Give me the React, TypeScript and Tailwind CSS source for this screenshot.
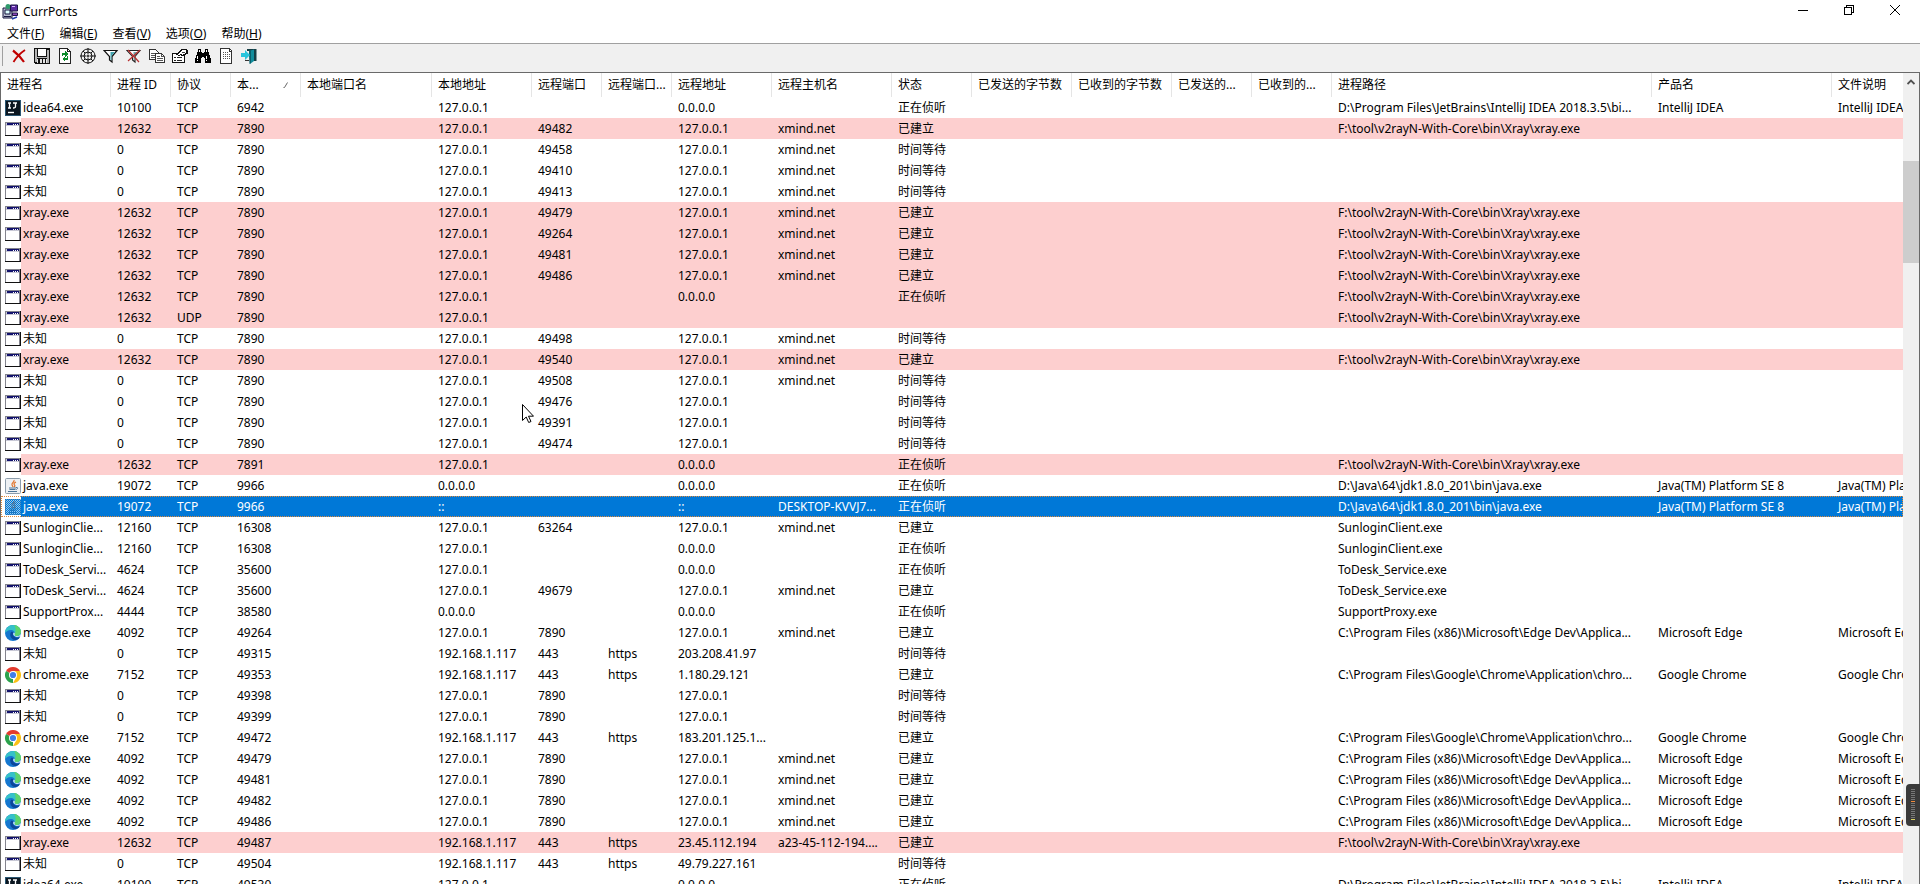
import type { ReactNode } from "react";
import clsx from "clsx";

type IconKind = "app" | "idea" | "java" | "edge" | "chrome";

type Conn = {
  icon: IconKind;
  name: string;
  pid: string;
  proto: string;
  localPort: string;
  localAddr: string;
  remotePort: string;
  remotePortName: string;
  remoteAddr: string;
  host: string;
  state: string;
  path: string;
  product: string;
  desc: string;
  selected?: boolean;
};

const LISTEN = "正在侦听";
const OPEN = "已建立";
const WAIT = "时间等待";

const XRAY_PATH = "F:\\tool\\v2rayN-With-Core\\bin\\Xray\\xray.exe";
const EDGE_PATH = "C:\\Program Files (x86)\\Microsoft\\Edge Dev\\Applica...";
const CHROME_PATH = "C:\\Program Files\\Google\\Chrome\\Application\\chro...";
const IDEA_PATH = "D:\\Program Files\\JetBrains\\IntelliJ IDEA 2018.3.5\\bi...";
const JAVA_PATH = "D:\\Java\\64\\jdk1.8.0_201\\bin\\java.exe";

const base: Conn = {
  icon: "app",
  name: "未知",
  pid: "0",
  proto: "TCP",
  localPort: "7890",
  localAddr: "127.0.0.1",
  remotePort: "",
  remotePortName: "",
  remoteAddr: "127.0.0.1",
  host: "",
  state: WAIT,
  path: "",
  product: "",
  desc: "",
};

const unknown = (over: Partial<Conn>): Conn => ({ ...base, ...over });

const xray = (over: Partial<Conn>): Conn => ({
  ...base,
  name: "xray.exe",
  pid: "12632",
  host: "xmind.net",
  state: OPEN,
  path: XRAY_PATH,
  ...over,
});

const edge = (localPort: string): Conn => ({
  ...base,
  icon: "edge",
  name: "msedge.exe",
  pid: "4092",
  localPort,
  remotePort: "7890",
  host: "xmind.net",
  state: OPEN,
  path: EDGE_PATH,
  product: "Microsoft Edge",
  desc: "Microsoft Edge",
});

const chrome = (localPort: string, remoteAddr: string): Conn => ({
  ...base,
  icon: "chrome",
  name: "chrome.exe",
  pid: "7152",
  localPort,
  localAddr: "192.168.1.117",
  remotePort: "443",
  remotePortName: "https",
  remoteAddr,
  state: OPEN,
  path: CHROME_PATH,
  product: "Google Chrome",
  desc: "Google Chrome",
});

const idea = (localPort: string): Conn => ({
  ...base,
  icon: "idea",
  name: "idea64.exe",
  pid: "10100",
  localPort,
  remoteAddr: "0.0.0.0",
  state: LISTEN,
  path: IDEA_PATH,
  product: "IntelliJ IDEA",
  desc: "IntelliJ IDEA",
});

const java = (addr: string, over: Partial<Conn> = {}): Conn => ({
  ...base,
  icon: "java",
  name: "java.exe",
  pid: "19072",
  localPort: "9966",
  localAddr: addr,
  remoteAddr: addr,
  state: LISTEN,
  path: JAVA_PATH,
  product: "Java(TM) Platform SE 8",
  desc: "Java(TM) Platform SE 8",
  ...over,
});

const service = (name: string, pid: string, localPort: string, path: string, over: Partial<Conn> = {}): Conn => ({
  ...base,
  name,
  pid,
  localPort,
  path,
  remoteAddr: "0.0.0.0",
  state: LISTEN,
  ...over,
});

const rows: Conn[] = [
  idea("6942"),
  xray({ remotePort: "49482" }),
  unknown({ remotePort: "49458", host: "xmind.net" }),
  unknown({ remotePort: "49410", host: "xmind.net" }),
  unknown({ remotePort: "49413", host: "xmind.net" }),
  xray({ remotePort: "49479" }),
  xray({ remotePort: "49264" }),
  xray({ remotePort: "49481" }),
  xray({ remotePort: "49486" }),
  xray({ remoteAddr: "0.0.0.0", host: "", state: LISTEN }),
  xray({ proto: "UDP", remoteAddr: "", host: "", state: "" }),
  unknown({ remotePort: "49498", host: "xmind.net" }),
  xray({ remotePort: "49540" }),
  unknown({ remotePort: "49508", host: "xmind.net" }),
  unknown({ remotePort: "49476" }),
  unknown({ remotePort: "49391" }),
  unknown({ remotePort: "49474" }),
  xray({ localPort: "7891", remoteAddr: "0.0.0.0", host: "", state: LISTEN }),
  java("0.0.0.0"),
  java("::", { host: "DESKTOP-KVVJ7...", selected: true }),
  service("SunloginClie...", "12160", "16308", "SunloginClient.exe", {
    remotePort: "63264",
    remoteAddr: "127.0.0.1",
    host: "xmind.net",
    state: OPEN,
  }),
  service("SunloginClie...", "12160", "16308", "SunloginClient.exe"),
  service("ToDesk_Servi...", "4624", "35600", "ToDesk_Service.exe"),
  service("ToDesk_Servi...", "4624", "35600", "ToDesk_Service.exe", {
    remotePort: "49679",
    remoteAddr: "127.0.0.1",
    host: "xmind.net",
    state: OPEN,
  }),
  service("SupportProx...", "4444", "38580", "SupportProxy.exe", { localAddr: "0.0.0.0" }),
  edge("49264"),
  unknown({ localPort: "49315", localAddr: "192.168.1.117", remotePort: "443", remotePortName: "https", remoteAddr: "203.208.41.97" }),
  chrome("49353", "1.180.29.121"),
  unknown({ localPort: "49398", remotePort: "7890" }),
  unknown({ localPort: "49399", remotePort: "7890" }),
  chrome("49472", "183.201.125.1..."),
  edge("49479"),
  edge("49481"),
  edge("49482"),
  edge("49486"),
  xray({
    localPort: "49487",
    localAddr: "192.168.1.117",
    remotePort: "443",
    remotePortName: "https",
    remoteAddr: "23.45.112.194",
    host: "a23-45-112-194....",
  }),
  unknown({ localPort: "49504", localAddr: "192.168.1.117", remotePort: "443", remotePortName: "https", remoteAddr: "49.79.227.161" }),
  idea("49530"),
];

const columns = [
  { label: "进程名", width: "w-[110px]" },
  { label: "进程 ID", width: "w-[60px]" },
  { label: "协议", width: "w-[60px]" },
  { label: "本...", width: "w-[70px]", sorted: true },
  { label: "本地端口名", width: "w-[131px]" },
  { label: "本地地址", width: "w-[100px]" },
  { label: "远程端口", width: "w-[70px]" },
  { label: "远程端口...", width: "w-[70px]" },
  { label: "远程地址", width: "w-[100px]" },
  { label: "远程主机名", width: "w-[120px]" },
  { label: "状态", width: "w-[80px]" },
  { label: "已发送的字节数", width: "w-[100px]" },
  { label: "已收到的字节数", width: "w-[100px]" },
  { label: "已发送的...", width: "w-[80px]" },
  { label: "已收到的...", width: "w-[80px]" },
  { label: "进程路径", width: "w-[320px]" },
  { label: "产品名", width: "w-[180px]" },
  { label: "文件说明", width: "" },
];

const menus = [
  { label: "文件", key: "F" },
  { label: "编辑", key: "E" },
  { label: "查看", key: "V" },
  { label: "选项", key: "O" },
  { label: "帮助", key: "H" },
];

function Svg({ children, crisp = true }: { children: ReactNode; crisp?: boolean }) {
  return (
    <svg width="16" height="16" viewBox="0 0 16 16" fill="none" shapeRendering={crisp ? "crispEdges" : "auto"} aria-hidden="true">
      {children}
    </svg>
  );
}

function ProcessIcon({ kind, selected }: { kind: IconKind; selected?: boolean }) {
  if (kind === "idea") {
    return (
      <Svg crisp={false}>
        <path d="M0 0h16v16H0z" fill="#2a5570" />
        <path d="M1 1h14v14H1z" fill="#0b1620" />
        <path d="M3 3h3M4.500 3v5M3 8h3M8 3h4M10.500 3v3.500Q10.500 8 8 8" stroke="#fff" strokeWidth="1.300" />
        <path d="M3 12.500h6" stroke="#fff" strokeWidth="1.400" />
      </Svg>
    );
  }
  if (kind === "java") {
    return (
      <Svg crisp={false}>
        <rect x="0.500" y="0.500" width="15" height="15" rx="1" fill="#eef1f4" stroke="#8c9cab" />
        <path d="M9 2c1 2-3 3-2 5 .3.700 1 1 .8 2M11 4C9 5 8.500 6 9.500 7s0 1.500-.5 2" stroke="#e0762f" strokeWidth="1.200" />
        <path d="M4 10h7M4.500 11.500h6M11 9.500c2.500-.5 2 1.500 0 2M3 13.500h9" stroke="#4c7597" />
        {selected && (
          <>
            <path d="M0 0h16v16H0z" fill="#0078d7" fillOpacity="0.350" />
            <path
              d="M0 .5h16M0 2.500h16M0 4.500h16M0 6.500h16M0 8.500h16M0 10.500h16M0 12.500h16M0 14.500h16"
              stroke="#0078d7"
              strokeDasharray="1 1"
            />
            <path
              d="M1 1.500h15M1 3.500h15M1 5.500h15M1 7.500h15M1 9.500h15M1 11.500h15M1 13.500h15M1 15.500h15"
              stroke="#0078d7"
              strokeDasharray="1 1"
            />
          </>
        )}
      </Svg>
    );
  }
  if (kind === "edge") {
    return (
      <Svg crisp={false}>
        <circle cx="8" cy="8" r="8" fill="#1577cf" />
        <path d="M0 8C0 3 4 0 8 0c5 0 8 3.500 8 6.800C16 9.500 14 11 11.500 11c-1.500 0-2.500-.6-2-1.500C10.500 7.500 9 5 6 5 3 5 1 6.500 0 8z" fill="#35c1c8" />
        <path d="M9 0c4 .3 7 3.500 7 6.800C16 9.500 14 11 11.500 11c-1.500 0-2.500-.6-2-1.500C11 7 11 2 9 0z" fill="#5fd46c" />
        <path d="M6 7c-2 3 0 7.500 4 8 2 .2 4-1 5-3-2 1-5 1-6.500-1C7.500 9.800 7.800 8.500 8.500 8 8 7 7 6.500 6 7z" fill="#0c479b" />
        <path d="M9 7.500c-.8.500-1 2 0 3 1.500 1.500 4 1.500 6.500.8l.5-2.300C14.500 11 13 11.200 11.500 11c-1.500 0-2.500-.6-2-1.500.3-.8.200-1.500-.5-2z" fill="#fff" />
      </Svg>
    );
  }
  if (kind === "chrome") {
    return (
      <Svg crisp={false}>
        <path d="M8 8 1.070 4A8 8 0 0 1 14.930 4z" fill="#e33b2e" />
        <path d="M8 8v8A8 8 0 0 1 1.070 4z" fill="#2ba24c" />
        <path d="M8 4h6.930A8 8 0 0 1 8 16l3.460-6z" fill="#fbc116" />
        <circle cx="8" cy="8" r="4" fill="#fff" />
        <circle cx="8" cy="8" r="3.100" fill="#3f7ee8" />
      </Svg>
    );
  }
  return (
    <Svg>
      <path d="M0 1h16v14H0z" fill="#111" />
      <path d="M0 1h15v13H0z" fill="#84848e" />
      <path d="M1 2h13v3H1z" fill="#c9c9d6" />
      <path d="M2 2h12v2H2z" fill="#12126c" />
      <path d="M1 5h13v9H1z" fill="#fff" />
      <path d="M8 3h1v1H8zM10 3h1v1h-1zM12 3h1v1h-1z" fill="#fff" />
    </Svg>
  );
}

const tools: { label: string; icon: ReactNode }[] = [
  {
    label: "关闭连接",
    icon: (
      <Svg crisp={false}>
        <path d="M2 2.500C6 5.500 10 9.500 13 14" stroke="#c00000" strokeWidth="2.200" />
        <path d="M14 2C9.500 5 5.500 9 2.500 14" stroke="#c00000" strokeWidth="1.800" />
      </Svg>
    ),
  },
  {
    label: "保存",
    icon: (
      <Svg>
        <path d="M0 0h16v16H1L0 15z" fill="#111" />
        <path d="M1 1h2v13H1zM13 2h2v13h-2zM2 9h12v1H2z" fill="#b4b4b4" />
        <path d="M3 0h10v8H3z" fill="#fff" />
        <path d="M3 0h1v8H3zM12 0h1v8h-1zM3 0h10v1H3zM3 8h10v1H3z" fill="#111" />
        <path d="M3 11h10v4H3z" fill="#e4e4e4" />
        <path d="M4 11h2v4H4zM8 11h1v4H8zM11 11h1v4h-1z" fill="#111" />
      </Svg>
    ),
  },
  {
    label: "刷新",
    icon: (
      <Svg>
        <path d="M2.500.5h8l3 3v12h-11z" fill="#fff" stroke="#222" />
        <path d="M10.500.5v3h3" stroke="#222" />
        <path d="M5 8V5h3V3l3 3-3 3V7H6v1zM11 8v4H8v2l-3-3 3-3v2h2V8z" fill="#0a8a2a" />
      </Svg>
    ),
  },
  {
    label: "查找窗口",
    icon: (
      <Svg crisp={false}>
        <circle cx="8" cy="8" r="7" stroke="#111" />
        <circle cx="8" cy="8" r="4" stroke="#111" />
        <path d="M8 0v6.500M8 9.500V16M0 8h6.500M9.500 8H16" stroke="#111" />
        <circle cx="8" cy="8" r="1" fill="#111" />
        <path d="m3 3 2 2M13 3l-2 2M3 13l2-2M13 13l-2-2" stroke="#111" />
      </Svg>
    ),
  },
  {
    label: "筛选",
    icon: (
      <Svg crisp={false}>
        <path d="M1 2.500h13L9 8.500V14l-2.500-2V8.500z" fill="#fff" stroke="#111" strokeWidth="1.200" />
        <path d="M7.500 4H12L8.500 8v4.500l-1-1z" fill="#3fa3ad" />
      </Svg>
    ),
  },
  {
    label: "清除筛选",
    icon: (
      <Svg crisp={false}>
        <path d="M1 2.500h13L9 8.500V14l-2.500-2V8.500z" fill="#fff" stroke="#222" strokeWidth="1.100" />
        <path d="M7.500 4H12L8.500 8v4.500l-1-1z" fill="#70a8ac" />
        <path d="m2 2 11 12M14 2 2 13" stroke="#b83030" strokeWidth="1.200" />
      </Svg>
    ),
  },
  {
    label: "复制",
    icon: (
      <Svg>
        <path d="M.5 1.500h6l3 3v7h-9z" fill="#fff" stroke="#333" />
        <path d="M2 5.500h5M2 7.500h5M2 9.500h4" stroke="#555" />
        <path d="M6.500 5.500h6l3 3v6h-9z" fill="#fff" stroke="#333" />
        <path d="M12.500 5.500v3h3M8 8.500h3M8 10.500h6M8 12.500h6" stroke="#555" />
      </Svg>
    ),
  },
  {
    label: "属性",
    icon: (
      <Svg>
        <path d="M.5 5.500h12v9H.5z" fill="#fff" stroke="#111" />
        <path d="M2 9.500h2M5 9.500h5M2 12.500h2M5 12.500h5" stroke="#222" />
        <path d="M4 6h1V5h1V4h1V3h1V2h1V1h6v1h1v4h-2v1h-2v1H9V7H8v1H6V7H4z" fill="#111" />
        <path d="M6 6h1V5h1V4h1V3h1V2h4v3h-1v1h-2v1h-1V6H8v1H6z" fill="#fff" />
        <path d="M10 4h3v1h-3z" fill="#444" />
      </Svg>
    ),
  },
  {
    label: "查找",
    icon: (
      <Svg>
        <path d="M3 1h3v3h1v1h2V4h1V1h3v3h1v3h1v3h1v5h-6v-5H9V9H7v1H6v5H0v-5h1V7h1V4h1z" fill="#000" />
        <path d="M4 2h1v2H4zM11 2h1v2h-1zM2 8h1v3H2zM11 8h1v3h-1zM2 12h1v1H2zM11 12h1v1h-1z" fill="#fff" />
      </Svg>
    ),
  },
  {
    label: "报告",
    icon: (
      <Svg>
        <path d="M2.500.5h9l2 2v13h-11z" fill="#fff" stroke="#333" />
        <path d="M11.500 1v2.500H14" stroke="#333" />
        <path d="M5 4.500h6M5 6.500h7M5 8.500h7M5 10.500h7" stroke="#555" strokeDasharray="1 1" />
      </Svg>
    ),
  },
  {
    label: "退出",
    icon: (
      <Svg crisp={false}>
        <path d="M6 1h9.500v12H12V3H6z" fill="#173f46" />
        <path d="m8 3 5-1.500V13L9 16z" fill="#128d9c" />
        <path d="m8 3 2-.6V15l-1.500 1z" fill="#0b5f6b" />
        <path d="M0 5h4V2l5 5-5 5V9H0z" fill="#27c4dc" />
        <path d="M4 12.500h4" stroke="#333" />
      </Svg>
    ),
  },
];

function TitleIcon() {
  return (
    <Svg crisp={false}>
      <path d="M1 4h9v10H1z" fill="#b9bdd0" stroke="#16163f" />
      <path d="M3 6h5v4H3z" fill="#dff" stroke="#16163f" />
      <path d="M2 12.500h7" stroke="#16163f" />
      <circle cx="6" cy="2.500" r="2.500" fill="#2f9a6b" />
      <path d="M8.500 1h7v6h-7z" fill="#5a2aa0" stroke="#1b1445" />
      <path d="M10 2.500h3" stroke="#d9b8ff" />
      <path d="M10.500 9h5v2.500h-5z" fill="#8d46b8" stroke="#1b1445" />
      <path d="M10 15l5-2" stroke="#1c3aa8" strokeWidth="1.500" />
    </Svg>
  );
}

function TitleBar() {
  return (
    <header className="flex h-6 items-start justify-between">
      <div className="flex items-center gap-[5px] pt-1 pl-0.5">
        <TitleIcon />
        <h1 className="leading-4">CurrPorts</h1>
      </div>
      <div className="flex pr-0.5">
        <button aria-label="最小化" className="flex h-5 w-[46px] items-center justify-center">
          <svg width="10" height="10" viewBox="0 0 10 10" stroke="#000" shapeRendering="crispEdges">
            <path d="M0 5.500h10" />
          </svg>
        </button>
        <button aria-label="还原" className="flex h-5 w-[46px] items-center justify-center">
          <svg width="10" height="10" viewBox="0 0 10 10" stroke="#000" fill="none" shapeRendering="crispEdges">
            <path d="M.5 2.500h7v7h-7zM2.500 2V.5h7v7H8" />
          </svg>
        </button>
        <button aria-label="关闭" className="flex h-5 w-[46px] items-center justify-center">
          <svg width="10" height="10" viewBox="0 0 10 10" stroke="#000">
            <path d="m0 0 10 10M10 0 0 10" />
          </svg>
        </button>
      </div>
    </header>
  );
}

function MenuBar() {
  return (
    <nav className="flex h-5 gap-px border-b border-[#a0a0a0]">
      {menus.map((m) => (
        <button key={m.key} className="px-[7px] leading-5">
          {m.label}(<span className="underline">{m.key}</span>)
        </button>
      ))}
    </nav>
  );
}

function Toolbar() {
  return (
    <div role="toolbar" className="flex h-[29px] items-center border-b border-[#696969] bg-[#f0f0f0] pb-1 pl-0.5">
      <div className="mr-1 h-5 w-px bg-[#a0a0a0]" />
      {tools.map((t) => (
        <button key={t.label} aria-label={t.label} className="flex size-[23px] items-center justify-center">
          {t.icon}
        </button>
      ))}
    </div>
  );
}

function Cell({ children }: { children?: ReactNode }) {
  return <td className="overflow-hidden pl-1.5 whitespace-nowrap">{children}</td>;
}

function Row({ row }: { row: Conn }) {
  return (
    <tr
      className={clsx(
        "h-[21px]",
        row.name === "xray.exe" && "bg-[#fdcfcf]",
        row.selected && "bg-[#0078d7] text-white outline-1 -outline-offset-1 outline-dotted outline-[#e08a3c]"
      )}
    >
      <td className="overflow-hidden whitespace-nowrap">
        <div className="flex items-center">
          <div className="flex h-[21px] w-5 shrink-0 items-center justify-end bg-white">
            <ProcessIcon kind={row.icon} selected={row.selected} />
          </div>
          <span className="pl-0.5">{row.name}</span>
        </div>
      </td>
      <Cell>{row.pid}</Cell>
      <Cell>{row.proto}</Cell>
      <Cell>{row.localPort}</Cell>
      <Cell />
      <Cell>{row.localAddr}</Cell>
      <Cell>{row.remotePort}</Cell>
      <Cell>{row.remotePortName}</Cell>
      <Cell>{row.remoteAddr}</Cell>
      <Cell>{row.host}</Cell>
      <Cell>{row.state}</Cell>
      <Cell />
      <Cell />
      <Cell />
      <Cell />
      <Cell>{row.path}</Cell>
      <Cell>{row.product}</Cell>
      <Cell>{row.desc}</Cell>
    </tr>
  );
}

function ConnectionTable() {
  return (
    <div className="min-w-0 flex-1 overflow-hidden">
      <table className="w-full table-fixed border-separate border-spacing-0">
        <thead>
          <tr className="h-6">
            {columns.map((c, i) => (
              <th
                key={i}
                className={clsx(
                  "overflow-hidden pl-1.5 text-left font-normal whitespace-nowrap",
                  c.width,
                  c.width && "border-r border-[#e5e5e5]"
                )}
              >
                {c.sorted ? (
                  <span className="flex items-center justify-between pr-3">
                    {c.label}
                    <svg width="5" height="6" viewBox="0 0 5 6" stroke="#666" aria-hidden="true">
                      <path d="M.5 5.500h1l3-5" fill="none" />
                    </svg>
                  </span>
                ) : (
                  c.label
                )}
              </th>
            ))}
          </tr>
        </thead>
        <tbody>
          {rows.map((r, i) => (
            <Row key={i} row={r} />
          ))}
        </tbody>
      </table>
    </div>
  );
}

function ScrollBar() {
  return (
    <div className="flex w-4 shrink-0 flex-col bg-[#f0f0f0]">
      <button aria-label="向上滚动" className="flex h-[18px] items-center justify-center">
        <svg width="8" height="6" viewBox="0 0 8 6" fill="none" stroke="#505050" strokeWidth="1.800">
          <path d="M.5 5 4 1.500 7.500 5" />
        </svg>
      </button>
      <div className="mt-[70px] h-[102px] bg-[#cdcdcd]" />
    </div>
  );
}

export default function App() {
  return (
    <div className="relative flex h-screen flex-col overflow-hidden bg-white font-['Noto_Sans','Noto_Sans_CJK_SC',sans-serif] text-xs text-black">
      <TitleBar />
      <MenuBar />
      <Toolbar />
      <main className="flex min-h-0 flex-1 border-x border-[#696969]">
        <ConnectionTable />
        <ScrollBar />
      </main>

      {/* Docked side handle */}
      <div className="absolute right-0 bottom-[58px] flex h-[42px] w-3.5 items-center justify-center rounded-l bg-[#3a3a3a]">
        <svg width="4" height="32" viewBox="0 0 4 32" aria-hidden="true">
          <path d="M2 0v32" stroke="#777" strokeWidth="4" strokeDasharray="1 1" />
          <path d="M0 12.500h4" stroke="#f08a3c" />
          <path d="M0 30.500h4" stroke="#d8d060" />
        </svg>
      </div>

      {/* Pointer */}
      <svg className="absolute top-[404px] left-[522px]" width="12" height="19" viewBox="0 0 12 19" aria-hidden="true">
        <path d="M.5.500v16l3.700-3.500 2.500 5.500 2.300-1-2.500-5.300h5z" fill="#fff" stroke="#000" />
      </svg>
    </div>
  );
}
